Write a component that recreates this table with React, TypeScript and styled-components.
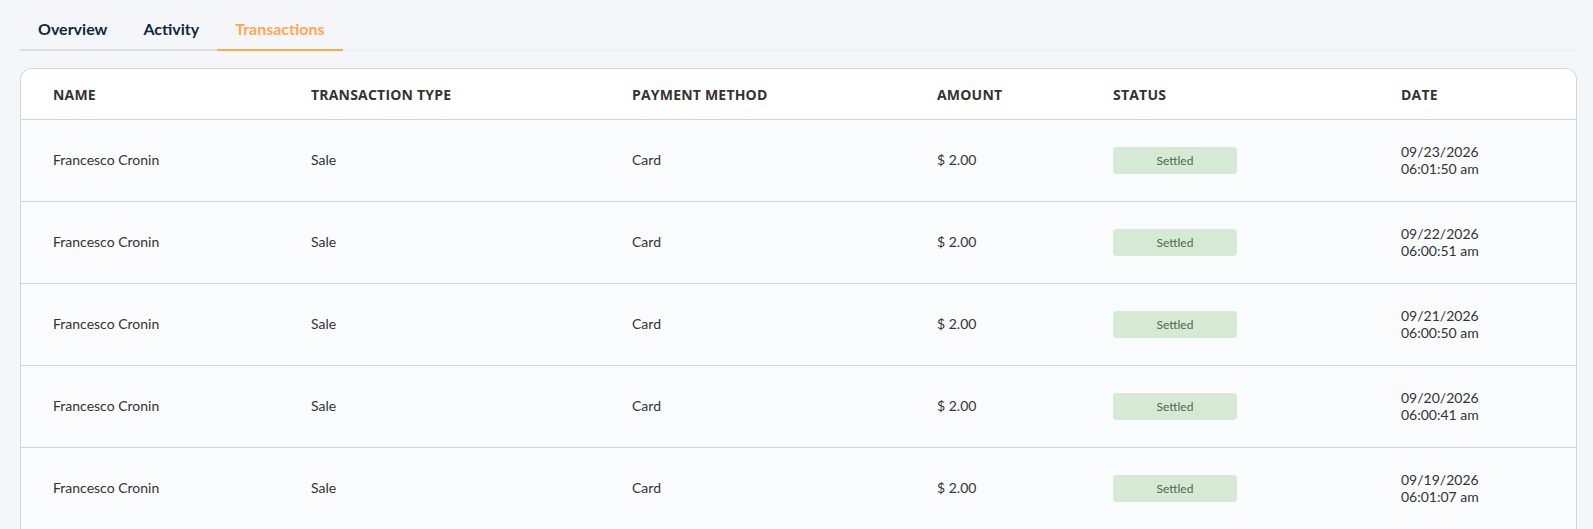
import styled, { createGlobalStyle } from "styled-components";
import { useState } from "react";

const GlobalStyle = createGlobalStyle`
  body {
    margin: 0;
    background-color: #f5f6fa;
    font-family: "Lato", "Noto Sans", sans-serif;
    color: #333333;
  }
`;

const Page = styled.div`
  padding: 0 16px 0 20px;
`;

const TabList = styled.div`
  display: flex;
  border-bottom: 1px solid #eceef3;
`;

const Tab = styled.button<{ $active?: boolean }>`
  padding: 19px 18px 10px;
  margin-bottom: -1px;
  background: none;
  border: none;
  border-bottom: 2px solid ${(p) => (p.$active ? "#ffa94d" : "#dcdde2")};
  font-family: "Lato", sans-serif;
  font-size: 16px;
  line-height: 20px;
  font-weight: 700;
  color: ${(p) => (p.$active ? "#ffa94d" : "#10283a")};
  cursor: pointer;
`;

const Card = styled.div`
  margin-top: 17px;
  background-color: #fafbfd;
  border: 1px solid #d3d4d8;
  border-bottom: none;
  border-radius: 12px 12px 0 0;
  overflow: hidden;
`;

const Row = styled.div<{ $head?: boolean }>`
  display: grid;
  grid-template-columns: 258px 321px 305px 176px 288px 1fr;
  align-items: center;
  padding-left: 32px;
  height: ${(p) => (p.$head ? "50px" : "81px")};
  background-color: ${(p) => (p.$head ? "#ffffff" : "#fafbfd")};
  border-bottom: 1px solid #d3d4d8;
`;

const HeadCell = styled.div`
  font-family: "Open Sans", sans-serif;
  font-size: 14px;
  font-weight: 700;
  letter-spacing: 0.2px;
  color: #333333;
  text-transform: uppercase;
`;

const Cell = styled.div`
  font-size: 14px;
  line-height: 17px;
  color: #333333;
  margin-top: -2px;
`;

const Badge = styled.span`
  display: flex;
  align-items: center;
  justify-content: center;
  width: 124px;
  height: 27px;
  margin-top: 2px;
  border-radius: 4px;
  background-color: #d6e9d4;
  color: #4b6b47;
  font-size: 12px;
`;

const columns = ["Name", "Transaction type", "Payment method", "Amount", "Status", "Date"];

const transactions = [
  { date: "09/23/2026", time: "06:01:50 am" },
  { date: "09/22/2026", time: "06:00:51 am" },
  { date: "09/21/2026", time: "06:00:50 am" },
  { date: "09/20/2026", time: "06:00:41 am" },
  { date: "09/19/2026", time: "06:01:07 am" },
];

export default function App() {
  const [tab, setTab] = useState("Transactions");

  return (
    <Page>
      <GlobalStyle />
      <TabList>
        {["Overview", "Activity", "Transactions"].map((t) => (
          <Tab key={t} $active={t === tab} onClick={() => setTab(t)}>
            {t}
          </Tab>
        ))}
      </TabList>
      <Card>
        <Row $head>
          {columns.map((c) => (
            <HeadCell key={c}>{c}</HeadCell>
          ))}
        </Row>
        {transactions.map((tx) => (
          <Row key={tx.date}>
            <Cell>Francesco Cronin</Cell>
            <Cell>Sale</Cell>
            <Cell>Card</Cell>
            <Cell>$ 2.00</Cell>
            <Cell>
              <Badge>Settled</Badge>
            </Cell>
            <Cell>
              {tx.date}
              <br />
              {tx.time}
            </Cell>
          </Row>
        ))}
      </Card>
    </Page>
  );
}
